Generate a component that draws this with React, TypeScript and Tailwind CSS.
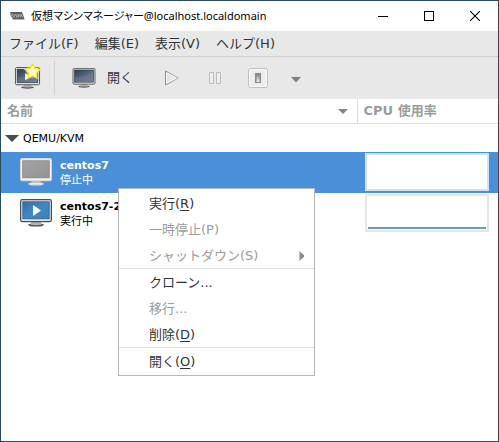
import React from "react";

const UI_FONT = "font-['DejaVu_Sans','Noto_Sans_CJK_JP',sans-serif]";
const TITLE_FONT = "font-['Noto_Sans','Noto_Sans_CJK_JP',sans-serif]";

type ScreenKind = "off" | "running" | "open" | "new";

function Monitor({ kind, className }: { kind: ScreenKind; className: string }) {
  const off = kind === "off";
  const dark = kind === "open" || kind === "new";
  const id = `screen-${kind}`;
  return (
    <svg viewBox="0 0 32 28" className={className} aria-hidden="true">
      <defs>
        <linearGradient id={id} x1="0" y1="0" x2="1" y2="1">
          <stop offset="0" stopColor={off ? "#a4a4a4" : dark ? "#2f3d54" : "#2f6fa8"} />
          <stop offset="0.5" stopColor={off ? "#9c9c9c" : dark ? "#56667f" : "#4189c2"} />
          <stop offset="1" stopColor={off ? "#929292" : dark ? "#6b7a90" : "#3b7fb8"} />
        </linearGradient>
      </defs>
      <ellipse cx="16" cy="26" rx="8" ry="1.600" fill={off ? "#dcdcda" : "#555753"} />
      <ellipse cx="16" cy="25.300" rx="6" ry="0.700" fill={off ? "#f0f0f0" : "#b4b6b2"} />
      <path d="M12 21h8l1 4H11z" fill={off ? "#b9bcc0" : "#b0b2ae"} />
      <rect x="0.600" y="0.600" width="30.800" height="22" rx="1.600" fill={off ? "#f2f2f0" : "#e2e4e0"} stroke={off ? "#d8d8d6" : "#4c4e4b"} strokeWidth="1.200" />
      <rect x="2.800" y="2.800" width="26.400" height="17" fill={`url(#${id})`} stroke={off ? "#808080" : dark ? "#222c3c" : "#2b6296"} strokeWidth="0.800" />
      {dark && <path d="M3.300 19.500V13C14 13 22 10 28.500 5v14.500z" fill="#ffffff" opacity="0.080" />}
      {kind === "running" && <path d="M13 6v11l8-5.500z" fill="#ffffff" />}
      {kind === "new" && (
        <>
          <path d="M13 8v9l7-4.500z" fill="#ffffff" />
          <circle cx="22.500" cy="5.500" r="8.500" fill="#f2ea3c" opacity="0.550" />
          <path d="M22.500-4l3 6.200 6.700.9-4.900 4.700 1.200 6.700-6-3.200-6 3.200 1.200-6.700-4.900-4.700 6.700-.9z" fill="#fffcc4" stroke="#efe326" strokeWidth="1.400" />
        </>
      )}
    </svg>
  );
}

function AppIcon() {
  return (
    <svg viewBox="0 0 16 10" className="h-[10px] w-4" aria-hidden="true">
      <path d="M1 1h12l2.500 7H4z" fill="#5c5c5a" />
      <path d="M1 1l3 7v1L1 4z" fill="#999" />
      <path d="M4 8h11.500v1H4z" fill="#b4b4b2" />
      <path d="M3 2.500l2 4 1-3.500 2 3.500V3M9.500 6.500V3l2 3 .5-3 1.500 3.500" fill="none" stroke="#c4c4c0" strokeWidth="0.700" />
    </svg>
  );
}

const menus = ["ファイル(F)", "編集(E)", "表示(V)", "ヘルプ(H)"];

function TitleBar() {
  const control = "flex h-full w-[46px] items-center justify-center";
  return (
    <header className={`flex h-[30px] items-center bg-white pl-2 text-[11px] text-black ${TITLE_FONT}`}>
      <AppIcon />
      <h1 className="ml-[6px] flex-1 whitespace-nowrap [font-feature-settings:'palt']">仮想マシンマネージャー@localhost.localdomain</h1>
      <button className={control} aria-label="最小化">
        <svg viewBox="0 0 10 10" className="size-[10px]"><path d="M0 5.500h10" stroke="#000" /></svg>
      </button>
      <button className={control} aria-label="最大化">
        <svg viewBox="0 0 10 10" className="size-[10px]"><rect x="0.500" y="0.500" width="9" height="9" fill="none" stroke="#000" /></svg>
      </button>
      <button className={control} aria-label="閉じる">
        <svg viewBox="0 0 10 10" className="size-[10px]"><path d="M0 0l10 10M10 0L0 10" stroke="#000" strokeWidth="1.100" /></svg>
      </button>
    </header>
  );
}

function Toolbar() {
  return (
    <div role="toolbar" className="flex h-[42px] items-center bg-[#e8e8e8] pl-3 text-[13px] text-[#2e3436]">
      <button className="flex w-7 justify-center" aria-label="新しい仮想マシン">
        <Monitor kind="new" className="h-[22px] w-[25px] overflow-visible" />
      </button>
      <div className="ml-[13px] h-[34px] w-px bg-[#d0d0d0]" />
      <button className="ml-[17px] flex items-center gap-[11px]">
        <Monitor kind="open" className="h-5 w-6" />
        開く
      </button>
      <button className="ml-[31px]" aria-label="実行" disabled>
        <svg viewBox="0 0 16 16" className="size-4">
          <defs>
            <linearGradient id="play-edge" x1="0" y1="0" x2="1" y2="0">
              <stop offset="0" stopColor="#8c8c8a" />
              <stop offset="1" stopColor="#b8b8b6" />
            </linearGradient>
          </defs>
          <path d="M1.500 1v14L14.500 8z" fill="#e4e4e2" stroke="url(#play-edge)" strokeLinejoin="round" />
          <path d="M2.500 3v10L12 8z" fill="none" stroke="#fafafa" />
        </svg>
      </button>
      <button className="ml-7" aria-label="一時停止" disabled>
        <svg viewBox="0 0 14 14" className="size-[14px]"><path d="M1.500 1.500h4v11h-4zM8.500 1.500h4v11h-4z" fill="#efefed" stroke="#bcbcba" /></svg>
      </button>
      <button className="ml-[26px]" aria-label="シャットダウン" disabled>
        <svg viewBox="0 0 20 20" className="size-5">
          <defs>
            <linearGradient id="switch-face" x1="0" y1="0" x2="0" y2="1">
              <stop offset="0" stopColor="#828280" />
              <stop offset="1" stopColor="#f4f4f2" />
            </linearGradient>
          </defs>
          <rect x="0.500" y="0.500" width="19" height="19" rx="2" fill="#ececea" stroke="#bebebc" />
          <rect x="1.500" y="1.500" width="17" height="17" rx="1" fill="none" stroke="#fafafa" />
          <path d="M7 5h6v10H7z" fill="#8a8a88" />
          <path d="M8.500 6h3v8h-3z" fill="url(#switch-face)" />
        </svg>
      </button>
      <button className="ml-[22px] mt-1" aria-label="シャットダウンのメニュー">
        <svg viewBox="0 0 12 6" className="h-[6px] w-3"><path d="M1 0h10L6 5.500z" fill="#7e8282" /></svg>
      </button>
    </div>
  );
}

function MachineRow({ name, status, selected = false }: { name: string; status: string; selected?: boolean }) {
  return (
    <tr className={selected ? "bg-[#4a90d9] text-white" : "text-black"}>
      <td className="h-[41px] p-0">
        <div className="flex items-center gap-2 pl-[19px]">
          <Monitor kind={selected ? "off" : "running"} className="h-7 w-8" />
          <div className="pt-[2px] text-[11px] leading-[15px]">
            <div className="font-bold">{name}</div>
            <div>{status}</div>
          </div>
        </div>
      </td>
      <td className="h-[41px] p-0 pl-2 pr-[9px]">
        <div className={`flex h-[38px] items-end border-2 bg-white px-px pb-px ${selected ? "border-[#d3e2f3]" : "border-[#e6e6e6]"}`}>
          {!selected && <div className="h-[2px] w-full bg-[#6ba0b0]" />}
        </div>
      </td>
    </tr>
  );
}

function MachineTable() {
  return (
    <table className="w-full table-fixed border-collapse text-left">
      <colgroup>
        <col />
        <col className="w-[141px]" />
      </colgroup>
      <thead className="text-[13px] text-[#9a9c9c]">
        <tr className="border-b border-[#dedede]">
          <th className="h-6 p-0 pl-[6px] font-bold">
            <div className="flex items-center justify-between pr-[9px] leading-6">
              名前
              <svg viewBox="0 0 10 5" className="h-[5px] w-[10px]" aria-hidden="true"><path d="M0 0h10L5 5z" fill="#858585" /></svg>
            </div>
          </th>
          <th className="h-6 border-l border-[#dedede] p-0 pl-[6px] font-bold leading-6">CPU 使用率</th>
        </tr>
      </thead>
      <tbody>
        <tr>
          <td colSpan={2} className="h-7 p-0">
            <div className="flex items-center gap-1 pl-1 pt-[2px] text-[11px] text-black">
              <svg viewBox="0 0 14 7" className="h-[7px] w-[14px]" aria-hidden="true"><path d="M0 0h14L7 7z" fill="#4a4a4a" /></svg>
              QEMU/KVM
            </div>
          </td>
        </tr>
        <MachineRow name="centos7" status="停止中" selected />
        <MachineRow name="centos7-2" status="実行中" />
      </tbody>
    </table>
  );
}

function MenuItem({ label, accel, disabled = false, submenu = false }: { label: string; accel?: string; disabled?: boolean; submenu?: boolean }) {
  return (
    <button role="menuitem" disabled={disabled} className={`flex h-[26px] w-full items-center justify-between pl-[30px] pr-[9px] pt-[2px] text-left ${disabled ? "text-[#9a9c9c]" : "text-[#2e3436]"}`}>
      <span>
        {label}
        {accel && <>({disabled ? accel : <span className="underline underline-offset-2">{accel}</span>})</>}
      </span>
      {submenu && <svg viewBox="0 0 6 10" className="h-[10px] w-[6px]" aria-hidden="true"><path d="M0.500 0v10l5-5z" fill="#858585" /></svg>}
    </button>
  );
}

function ContextMenu() {
  return (
    <div role="menu" className="absolute left-[117px] top-[187px] w-[197px] border border-[#b4b8ba] bg-white py-px text-[13px]">
      <MenuItem label="実行" accel="R" />
      <MenuItem label="一時停止" accel="P" disabled />
      <MenuItem label="シャットダウン" accel="S" disabled submenu />
      <hr className="border-[#dcdcdc]" />
      <MenuItem label="クローン..." />
      <MenuItem label="移行..." disabled />
      <MenuItem label="削除" accel="D" />
      <hr className="border-[#dcdcdc]" />
      <MenuItem label="開く" accel="O" />
    </div>
  );
}

export default function App() {
  return (
    <div className={`relative flex min-h-screen flex-col border border-[#2a4b5f] bg-white ${UI_FONT}`}>
      <TitleBar />
      <nav className="flex h-[26px] items-center gap-4 border-b border-[#cfcfcf] bg-[#e8e8e8] pl-2 pt-px text-[13px] text-[#2e3436]">
        {menus.map((label) => (
          <button key={label} className="whitespace-nowrap">{label}</button>
        ))}
      </nav>
      <Toolbar />
      <main className="flex-1">
        <MachineTable />
      </main>
      <ContextMenu />
    </div>
  );
}
